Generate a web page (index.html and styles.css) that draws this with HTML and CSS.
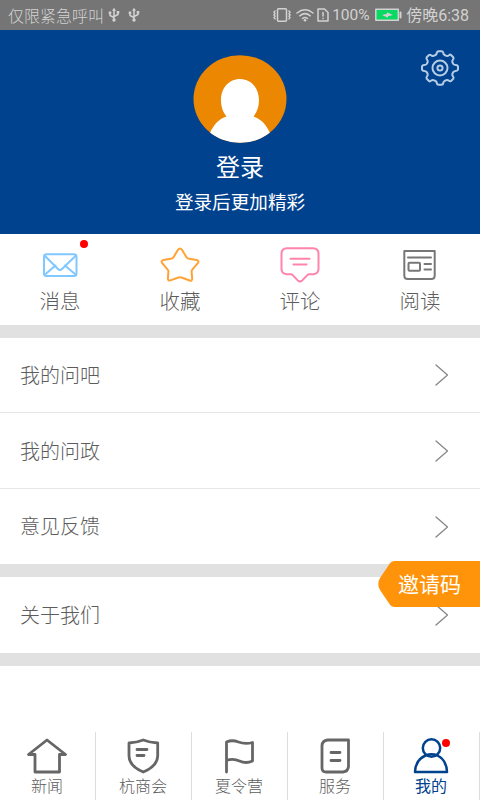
FILE: index.html
```html
<!DOCTYPE html>
<html lang="zh-CN">
<head>
<meta charset="utf-8">
<title>我的</title>
<link rel="stylesheet" href="styles.css">
</head>
<body>
<div class="app">
  <div class="status">
    <span>仅限紧急呼叫</span>
    <svg class="usb" width="12" height="16" viewBox="0 0 12 16"><path d="M6 3v9M6 10.500L2 8.500V6M6 9.500l4-2V5.500"/><path class="solid" d="M6 .8l2 3H4zM.7 4.500h2.600v2.600H.7zM8.700 4h2.600v2.600H8.700z"/><circle class="solid" cx="6" cy="13" r="1.700"/></svg>
    <svg class="usb" width="12" height="16" viewBox="0 0 12 16"><path d="M6 3v9M6 10.500L2 8.500V6M6 9.500l4-2V5.500"/><path class="solid" d="M6 .8l2 3H4zM.7 4.500h2.600v2.600H.7zM8.700 4h2.600v2.600H8.700z"/><circle class="solid" cx="6" cy="13" r="1.700"/></svg>
    <div class="status-right">
      <svg width="20" height="16" viewBox="0 0 20 16"><rect x="5.500" y="1.800" width="9" height="12.400" rx="1"/><path d="M3 4l-1 1.300 1 1.300-1 1.400 1 1.300-1 1.300 1 1.300M17 4l1 1.300-1 1.300 1 1.400-1 1.300 1 1.300-1 1.300"/></svg>
      <svg class="wifi" width="18" height="16" viewBox="0 0 18 16"><path d="M1 6q8-6.500 16 0M3.800 8.800q5.200-4.300 10.400 0M6.500 11.500q2.500-2 5 0"/><circle class="solid" cx="9" cy="13.300" r="1.300"/></svg>
      <svg class="sim" width="12" height="16" viewBox="0 0 12 16"><path d="M1 2h6.500L11 5.500V14H1zM6 5.500v3.500M6 11.300v.2"/></svg>
      <span class="percent">100%</span>
      <svg class="battery" width="28" height="14" viewBox="0 0 28 14"><rect x="1.800" y="1.200" width="22.500" height="11" fill="#08d963"/><path class="solid" d="M8 7l5-1.300V4.300L19 7l-5 1.200v1.500z"/><path stroke-width="2" d="M26.500 4.500v5"/></svg>
      <span class="time">傍晚6:38</span>
    </div>
  </div>

  <header class="profile">
    <svg class="gear" width="40" height="38" viewBox="0 0 40 38"><path d="M15.500 6Q16.500 5.500 16.800 4T18.300 2.200H21.700Q23 2.500 23.300 4T24.500 6L26.500 6.900Q27.800 7.200 29 6.200T31 6L33.300 8.300Q34 9.400 33 10.600T32.300 13L33.300 15Q34 16 35.800 16.100T38 17.400V20.600Q37.500 21.800 35.800 21.900T33.300 23L32.300 25Q32 26.200 33 27.400T33.300 29.700L31 32Q30 32.700 29 31.800T26.500 31.100L24.500 32Q23.500 32.600 23.300 34T21.700 35.800H18.300Q17 35.500 16.800 34T15.500 32L13.500 31.100Q12.200 30.800 11 31.800T9 32L6.700 29.700Q6 28.600 7 27.400T7.700 25L6.700 23Q6 22 4.200 21.900T2 20.600V17.400Q2.500 16.200 4.200 16.100T6.700 15L7.700 13Q8 11.800 7 10.600T6.700 8.300L9 6Q10 5.300 11 6.200T13.500 6.900Z"/><circle cx="20" cy="19" r="7.500"/><circle cx="20" cy="19" r="2.600"/></svg>
    <svg class="avatar" width="94" height="88" viewBox="0 0 94 88"><defs><clipPath id="face"><ellipse cx="47" cy="44" rx="46.500" ry="43.800"/></clipPath></defs><g clip-path="url(#face)"><path fill="#eb8700" d="M0 0h94v88H0z"/><path fill="#fff" d="M47 24c-11 0-19 9-19 21 0 7 2 12 5.500 16.500C26 64 21 69 17 78v12h60V78c-4-9-9-14-16.500-16.500C64 57 66 52 66 45c0-12-8-21-19-21z"/></g></svg>
    <div class="login">登录</div>
    <div class="tip">登录后更加精彩</div>
  </header>

  <nav class="shortcuts">
    <a class="shortcut blue"><svg width="40" height="40" viewBox="0 0 40 40"><rect x="4" y="9.300" width="32.500" height="21.800" rx="2.500"/><path d="M5 11l13 13q2 2 4 0l13.500-13M5 29.500l10.500-9M35.500 29.500L25 20.500"/></svg><span>消息</span><i class="dot"></i></a>
    <a class="shortcut orange"><svg width="40" height="40" viewBox="0 0 40 40"><path d="M18 4.800q2-2.700 4 0l4.500 7.500q.5.900 1.700 1.200l8.300 1.500q3 .8 1.300 3.100l-5.500 6.600q-.8 1-.7 2.200l.6 6.600q0 2.700-2.500 2L21.500 32.500q-1.500-.6-3 0L10.300 35.400q-2.400.7-2.400-2l.5-6.600q.1-1.200-.7-2.200L2.200 18.100q-1.700-2.300 1.300-3.100l8.300-1.500q1.200-.3 1.700-1.200z"/></svg><span>收藏</span></a>
    <a class="shortcut pink"><svg width="40" height="40" viewBox="0 0 40 40"><path d="M7 3.300h26q5.500 0 5.500 5.500v15q0 5-5 5.500H29q-1 0-1.700.8l-5 5.300q-2.300 2.300-4.600 0l-5-5.300q-.7-.8-1.700-.8H6.500q-5-.5-5-5.500v-15q0-5.500 5.500-5.500zM10.500 13.700h19M13.500 19.500h13"/></svg><span>评论</span></a>
    <a class="shortcut gray"><svg width="40" height="40" viewBox="0 0 40 40"><path d="M4.300 6h30.400v24.500q0 3.500-3.500 3.500H7.800q-3.500 0-3.500-3.500zM8 12.500h23M24.500 19h6.500M24.500 24.600h6.500"/><rect x="8.500" y="17.800" width="11.500" height="8" rx="1"/></svg><span>阅读</span></a>
  </nav>

  <main class="list">
    <div class="item"><span>我的问吧</span><svg class="arrow" width="14" height="24" viewBox="0 0 14 24"><path d="M1 2l11.500 10L1 22"/></svg></div>
    <div class="item"><span>我的问政</span><svg class="arrow" width="14" height="24" viewBox="0 0 14 24"><path d="M1 2l11.500 10L1 22"/></svg></div>
    <div class="item last"><span>意见反馈</span><svg class="arrow" width="14" height="24" viewBox="0 0 14 24"><path d="M1 2l11.500 10L1 22"/></svg></div>
    <div class="item about"><span>关于我们</span><svg class="arrow" width="14" height="24" viewBox="0 0 14 24"><path d="M1 2l11.500 10L1 22"/></svg></div>
  </main>

  <a class="invite"><svg width="102" height="46" viewBox="0 0 102 46"><path fill="#ff9309" d="M16 0H102V46H16Q13.500 45.500 12 43.800L2 29Q-1.500 23 2 17L12 2.200Q13.500.4 16 0z"/></svg><span>邀请码</span></a>

  <footer class="tabs">
    <a class="tab"><svg width="42" height="38" viewBox="0 0 42 38"><path d="M8.500 16.500H2.500L21 2 39.500 16.500H33.500V34H9V16.500"/></svg><span>新闻</span></a>
    <a class="tab"><svg width="42" height="38" viewBox="0 0 42 38"><path d="M7 5Q15 4.500 21.300 2 27.500 4.500 35.700 5V18Q35.500 28 21.300 34 7 28 7 18zM15 11.500h10M15 17.500h7"/></svg><span>杭商会</span></a>
    <a class="tab"><svg width="42" height="38" viewBox="0 0 42 38"><path d="M8.500 34V4Q14 1.500 20.500 4T34.500 4.500V23Q28 26 21.500 23T8.500 22.500"/></svg><span>夏令营</span></a>
    <a class="tab"><svg width="42" height="38" viewBox="0 0 42 38"><path d="M13.500 2H34.500V28.500Q34 33.500 29 34H12Q8 34 8 30V7.500Q8.500 2.500 13.500 2zM17 14.500h9M17 22.500h9"/></svg><span>服务</span></a>
    <a class="tab active"><svg width="42" height="38" viewBox="0 0 42 38"><circle cx="21.500" cy="10" r="8.700"/><path d="M15.500 17.500Q5.500 22 5 34H37Q36.500 22 27.500 17.500Q21.500 15 15.500 17.500"/></svg><span>我的</span><i class="dot"></i></a>
  </footer>
</div>
</body>
</html>
```

FILE: styles.css
```css
* { box-sizing: border-box; }
body {
  margin: 0;
  font-family: Roboto, "Noto Sans CJK SC", sans-serif;
  font-weight: 300;
  color: #777;
}
svg { display: block; flex: none; fill: none; stroke-linejoin: round; stroke-linecap: round; }
.app {
  position: relative;
  display: flex;
  flex-direction: column;
  width: 480px;
  height: 800px;
  overflow: hidden;
  background: #fff;
}

.status {
  display: flex;
  align-items: center;
  height: 30px;
  padding: 0 11px 0 8px;
  background: #757575;
  color: #d2d2d2;
  font-size: 16px;
  line-height: 30px;
  white-space: nowrap;
}
.status > span { padding-top: 3px; }
.time { padding-top: 2px; }
.percent, .time { font-weight: 400; }
.status svg { stroke: #d2d2d2; stroke-width: 1.5; }
.status .solid { fill: #d2d2d2; stroke: none; }
.usb { margin-left: 4px; }
.usb + .usb { margin-left: 8px; }
.status-right { display: flex; align-items: center; margin-left: auto; }
.wifi { margin-left: 4px; }
.sim { margin-left: 3px; }
.percent { margin-left: 3px; width: 39px; line-height: 28px; font-size: 15.500px; }
.battery { margin-left: 3px; }
.time { margin-left: 4px; }

.profile {
  position: relative;
  display: flex;
  flex-direction: column;
  align-items: center;
  height: 204px;
  padding-top: 25px;
  background: #00428e;
  color: #fff;
  font-weight: 400;
}
.gear { position: absolute; top: 19px; right: 20px; stroke: #b4cbe5; stroke-width: 2; }
.login { margin-top: 9px; font-size: 24px; line-height: 32px; }
.tip { margin-top: 6px; font-size: 18.600px; line-height: 26px; }

.shortcuts { display: grid; grid-template-columns: repeat(4, 1fr); height: 91px; }
.shortcut {
  position: relative;
  display: flex;
  flex-direction: column;
  align-items: center;
  padding-top: 11px;
  font-size: 20.500px;
  line-height: 30px;
}
.shortcut svg { stroke: currentColor; stroke-width: 2; }
.shortcut span { margin-top: 2px; color: #5c5c5c; }
.blue { color: #81c8ff; }
.orange { color: #ffa336; }
.pink { color: #ff83aa; }
.gray { color: #777; }
.dot { position: absolute; width: 8px; height: 8px; border-radius: 50%; background: #f00; }
.shortcut .dot { top: 6px; left: 80px; }

.list { border-top: 13px solid #e1e1e1; }
.item {
  display: flex;
  align-items: center;
  justify-content: space-between;
  height: 76px;
  padding: 0 31px 0 20px;
  border-bottom: 1px solid #e6e6e6;
  color: #5c5c5c;
  font-size: 20px;
  line-height: 30px;
}
.item span { padding-top: 2px; }
.item:first-child { height: 75px; }
.arrow { stroke: #888; stroke-width: 1.300; }
.last { height: 88px; border-bottom: 13px solid #e1e1e1; }
.last span { padding-top: 0; }
.about { height: 89px; border-bottom: 13px solid #e1e1e1; }

.invite { position: absolute; top: 561px; right: 0; color: #fff; font-weight: 400; }
.invite span { position: absolute; top: 9px; left: 20px; font-size: 21px; line-height: 30px; white-space: nowrap; }

.tabs { display: grid; grid-template-columns: repeat(5, 1fr); height: 68px; margin-top: auto; }
.tab {
  position: relative;
  display: flex;
  flex-direction: column;
  align-items: center;
  padding: 6px 1px 0 0;
  border-right: 1px solid #ddd;
  color: #5c5c5c;
  font-size: 16px;
  line-height: 22px;
}
.tab svg { stroke: #666; stroke-width: 2.800; }
.tab.active { color: #00428e; font-weight: 400; }
.tab.active svg { stroke: #00428e; stroke-width: 2.500; }
.tab .dot { top: 7px; left: 58px; }
```
